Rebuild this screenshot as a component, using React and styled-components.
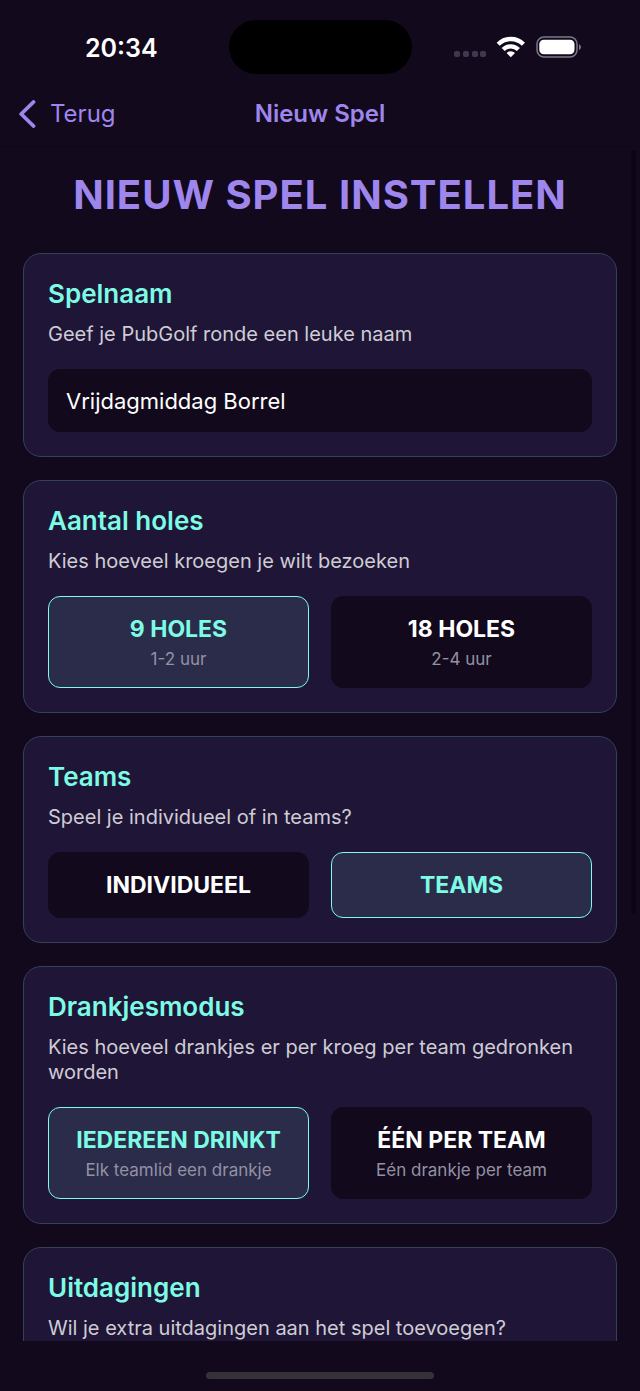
import React, { useState } from "react";
import styled, { createGlobalStyle } from "styled-components";

const color = {
  page: "#12091c",
  card: "#1f1637",
  cardBorder: "#364058",
  selected: "#2b2c4a",
  purple: "#9f86ed",
  mint: "#7dfbe5",
  text: "#ffffff",
  soft: "#cfccd5",
  muted: "#9391a3",
};

const GlobalStyle = createGlobalStyle`
  *, *::before, *::after { box-sizing: border-box; }
  body {
    margin: 0;
    background: ${color.page};
    color: ${color.text};
    font-family: Inter, sans-serif;
  }
  h1, h2, p { margin: 0; }
  button, input { font: inherit; color: inherit; border: 0; background: none; }
`;

const Screen = styled.div`
  display: flex;
  flex-direction: column;
  height: 100vh;
  background: ${color.page};
`;

const StatusBar = styled.div`
  display: grid;
  grid-template-columns: 1fr 183px 1fr;
  align-items: center;
  flex: none;
  height: 82px;
  padding-top: 12px;
`;

const Clock = styled.time`
  justify-self: center;
  padding: 2px 0 0 14px;
  font-size: 25px;
  font-weight: 600;
  line-height: 32px;
`;

const Island = styled.div`
  height: 54px;
  border-radius: 27px;
  background: #000000;
`;

const StatusIcons = styled.div`
  display: flex;
  align-items: center;
  justify-content: center;
  padding-right: 16px;
`;

const NavBar = styled.header`
  display: grid;
  grid-template-columns: 1fr auto 1fr;
  align-items: center;
  flex: none;
  height: 65px;
  padding: 0 18px;
  border-bottom: 1px solid #0e0716;
`;

const BackButton = styled.button`
  display: flex;
  align-items: center;
  justify-self: start;
  gap: 13px;
  padding: 0;
  color: ${color.purple};
  font-size: 24px;
  line-height: 32px;
  cursor: pointer;
`;

const NavTitle = styled.p`
  color: ${color.purple};
  font-size: 24px;
  font-weight: 600;
  line-height: 32px;
`;

const ScrollFrame = styled.div`
  position: relative;
  flex: 1;
  min-height: 0;
`;

const ScrollArea = styled.main`
  height: 100%;
  padding: 23px 23px 0;
  overflow-y: auto;
  scrollbar-width: none;
`;

const ScrollThumb = styled.div`
  position: absolute;
  top: 3px;
  right: 4px;
  width: 5px;
  height: 64%;
  border-radius: 3px;
  background: #0c0515;
`;

const Title = styled.h1`
  margin-bottom: 33px;
  color: ${color.purple};
  font-size: 40px;
  font-weight: 700;
  line-height: 50px;
  letter-spacing: 1px;
  text-align: center;
`;

const CardList = styled.div`
  display: flex;
  flex-direction: column;
  gap: 23px;
`;

const Card = styled.section`
  padding: 24px;
  border: 1px solid ${color.cardBorder};
  border-radius: 18px;
  background: ${color.card};
`;

const CardTitle = styled.h2`
  margin-bottom: 12px;
  color: ${color.mint};
  font-size: 26px;
  font-weight: 600;
  line-height: 32px;
`;

const CardText = styled.p`
  margin-bottom: 22px;
  color: ${color.soft};
  font-size: 20px;
  line-height: 25px;
`;

const TextInput = styled.input`
  display: block;
  width: 100%;
  height: 63px;
  padding: 0 18px;
  border-radius: 12px;
  background: ${color.page};
  font-size: 22px;
  outline: none;
`;

const Options = styled.div`
  display: grid;
  grid-template-columns: 1fr 1fr;
  gap: 22px;
`;

const Option = styled.button`
  display: flex;
  flex-direction: column;
  align-items: center;
  justify-content: center;
  gap: 3px;
  padding: 16px 8px;
  border: 1px solid ${(p) => (p.$on ? color.mint : color.page)};
  border-radius: 12px;
  background: ${(p) => (p.$on ? color.selected : color.page)};
  cursor: pointer;
`;

const OptionLabel = styled.span`
  color: ${(p) => (p.$on ? color.mint : color.text)};
  font-size: 23px;
  font-weight: 700;
  line-height: 32px;
`;

const OptionHint = styled.span`
  color: ${color.muted};
  font-size: 17px;
  line-height: 23px;
`;

const Footer = styled.footer`
  display: flex;
  justify-content: center;
  flex: none;
  height: 50px;
  padding-top: 31px;
`;

const HomeIndicator = styled.div`
  width: 228px;
  height: 7px;
  border-radius: 4px;
  background: #343139;
`;

function Choice({ label, options, initial }) {
  const [value, setValue] = useState(initial);
  return (
    <Options role="group" aria-label={label}>
      {options.map(([name, hint], i) => (
        <Option
          key={name}
          type="button"
          $on={i === value}
          aria-pressed={i === value}
          onClick={() => setValue(i)}
        >
          <OptionLabel $on={i === value}>{name}</OptionLabel>
          {hint && <OptionHint>{hint}</OptionHint>}
        </Option>
      ))}
    </Options>
  );
}

function StatusGlyphs() {
  return (
    <svg width="127" height="24" viewBox="0 0 127 24" aria-hidden="true">
      <g fill="#3f3850">
        <rect x="0" y="16" width="6" height="6" rx="2" />
        <rect x="9" y="16" width="6" height="6" rx="2" />
        <rect x="18" y="16" width="6" height="6" rx="2" />
        <rect x="26" y="16" width="6" height="6" rx="2" />
      </g>
      <g fill="none" stroke="#ffffff" strokeWidth="4.300">
        <path d="M44.2 9.300a17.600 17.600 0 0 1 25.200 0" />
        <path d="M49.200 14.600a10.600 10.600 0 0 1 15.200 0" />
      </g>
      <path d="M56.800 22.200l-4.200-4.200a5.900 5.900 0 0 1 8.400 0z" fill="#ffffff" />
      <rect x="83" y="2" width="40" height="20" rx="7" fill="none" stroke="#7c788a" strokeWidth="1.500" />
      <rect x="85.300" y="4.700" width="35.200" height="14.600" rx="4.500" fill="#ffffff" />
      <path d="M125 9.200c2.600 1 2.600 4.800 0 5.800z" fill="#7c788a" />
    </svg>
  );
}

export default function App() {
  const [name, setName] = useState("Vrijdagmiddag Borrel");
  return (
    <>
      <GlobalStyle />
      <Screen>
        <StatusBar>
          <Clock>20:34</Clock>
          <Island />
          <StatusIcons>
            <StatusGlyphs />
          </StatusIcons>
        </StatusBar>
        <NavBar>
          <BackButton type="button">
            <svg width="19" height="28" viewBox="0 0 19 28" fill="none" aria-hidden="true">
              <path
                d="M15.500 2L3.200 14l12.300 12"
                stroke="currentColor"
                strokeWidth="3.800"
                strokeLinecap="round"
                strokeLinejoin="round"
              />
            </svg>
            Terug
          </BackButton>
          <NavTitle>Nieuw Spel</NavTitle>
        </NavBar>
        <ScrollFrame>
          <ScrollArea>
            <Title>NIEUW SPEL INSTELLEN</Title>
            <CardList>
              <Card>
                <CardTitle>
                  <label htmlFor="game-name">Spelnaam</label>
                </CardTitle>
                <CardText>Geef je PubGolf ronde een leuke naam</CardText>
                <TextInput
                  id="game-name"
                  type="text"
                  value={name}
                  onChange={(e) => setName(e.target.value)}
                />
              </Card>
              <Card>
                <CardTitle>Aantal holes</CardTitle>
                <CardText>Kies hoeveel kroegen je wilt bezoeken</CardText>
                <Choice
                  label="Aantal holes"
                  initial={0}
                  options={[["9 HOLES", "1-2 uur"], ["18 HOLES", "2-4 uur"]]}
                />
              </Card>
              <Card>
                <CardTitle>Teams</CardTitle>
                <CardText>Speel je individueel of in teams?</CardText>
                <Choice label="Teams" initial={1} options={[["INDIVIDUEEL"], ["TEAMS"]]} />
              </Card>
              <Card>
                <CardTitle>Drankjesmodus</CardTitle>
                <CardText>Kies hoeveel drankjes er per kroeg per team gedronken worden</CardText>
                <Choice
                  label="Drankjesmodus"
                  initial={0}
                  options={[
                    ["IEDEREEN DRINKT", "Elk teamlid een drankje"],
                    ["ÉÉN PER TEAM", "Eén drankje per team"],
                  ]}
                />
              </Card>
              <Card>
                <CardTitle>Uitdagingen</CardTitle>
                <CardText>Wil je extra uitdagingen aan het spel toevoegen?</CardText>
              </Card>
            </CardList>
          </ScrollArea>
          <ScrollThumb />
        </ScrollFrame>
        <Footer>
          <HomeIndicator />
        </Footer>
      </Screen>
    </>
  );
}
